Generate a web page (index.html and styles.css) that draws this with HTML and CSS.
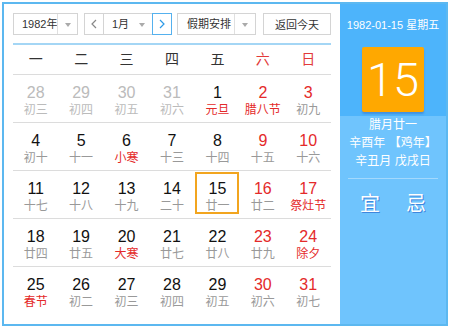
FILE: index.html
```html
<!DOCTYPE html>
<html lang="zh-CN">
<head>
    <meta charset="UTF-8">
    <title>万年历</title>
    <link rel="stylesheet" href="styles.css">
</head>
<body>

    <div class="calendar">
        <!-- Left: toolbar and month grid -->
        <div class="main">
            <div class="toolbar">
                <div class="select year">
                    <span class="select-text">1982年</span>
                    <span class="select-arrow"></span>
                </div>
                <div class="month-group">
                    <button class="nav prev">
                        <svg width="6" height="10" viewBox="0 0 6 10"><polyline points="5,1 1,5 5,9" fill="none" stroke="#888" stroke-width="1.2"/></svg>
                    </button>
                    <div class="select month">
                        <span class="select-text">1月</span>
                        <span class="select-arrow"></span>
                    </div>
                    <button class="nav next">
                        <svg width="6" height="10" viewBox="0 0 6 10"><polyline points="1,1 5,5 1,9" fill="none" stroke="#2d9ae6" stroke-width="1.2"/></svg>
                    </button>
                </div>
                <div class="select holiday">
                    <span class="select-text">假期安排</span>
                    <span class="select-arrow"></span>
                </div>
                <button class="today-btn">返回今天</button>
            </div>

            <div class="weekdays">
                <span>一</span><span>二</span><span>三</span><span>四</span><span>五</span>
                <span class="weekend">六</span><span class="weekend">日</span>
            </div>

            <div class="weeks">
                <div class="week">
                    <div class="day other"><b>28</b><i>初三</i></div>
                    <div class="day other"><b>29</b><i>初四</i></div>
                    <div class="day other"><b>30</b><i>初五</i></div>
                    <div class="day other"><b>31</b><i>初六</i></div>
                    <div class="day"><b>1</b><i class="fest">元旦</i></div>
                    <div class="day weekend"><b>2</b><i class="fest">腊八节</i></div>
                    <div class="day weekend"><b>3</b><i>初九</i></div>
                </div>
                <div class="week">
                    <div class="day"><b>4</b><i>初十</i></div>
                    <div class="day"><b>5</b><i>十一</i></div>
                    <div class="day"><b>6</b><i class="fest">小寒</i></div>
                    <div class="day"><b>7</b><i>十三</i></div>
                    <div class="day"><b>8</b><i>十四</i></div>
                    <div class="day weekend"><b>9</b><i>十五</i></div>
                    <div class="day weekend"><b>10</b><i>十六</i></div>
                </div>
                <div class="week">
                    <div class="day"><b>11</b><i>十七</i></div>
                    <div class="day"><b>12</b><i>十八</i></div>
                    <div class="day"><b>13</b><i>十九</i></div>
                    <div class="day"><b>14</b><i>二十</i></div>
                    <div class="day today"><b>15</b><i>廿一</i></div>
                    <div class="day weekend"><b>16</b><i>廿二</i></div>
                    <div class="day weekend"><b>17</b><i class="fest">祭灶节</i></div>
                </div>
                <div class="week">
                    <div class="day"><b>18</b><i>廿四</i></div>
                    <div class="day"><b>19</b><i>廿五</i></div>
                    <div class="day"><b>20</b><i class="fest">大寒</i></div>
                    <div class="day"><b>21</b><i>廿七</i></div>
                    <div class="day"><b>22</b><i>廿八</i></div>
                    <div class="day weekend"><b>23</b><i>廿九</i></div>
                    <div class="day weekend"><b>24</b><i class="fest">除夕</i></div>
                </div>
                <div class="week">
                    <div class="day"><b>25</b><i class="fest">春节</i></div>
                    <div class="day"><b>26</b><i>初二</i></div>
                    <div class="day"><b>27</b><i>初三</i></div>
                    <div class="day"><b>28</b><i>初四</i></div>
                    <div class="day"><b>29</b><i>初五</i></div>
                    <div class="day weekend"><b>30</b><i>初六</i></div>
                    <div class="day weekend"><b>31</b><i>初七</i></div>
                </div>
            </div>
        </div>

        <!-- Right: selected day details -->
        <div class="side">
            <div class="side-top">
                <div class="side-date">1982-01-15 星期五</div>
                <div class="big-day">15</div>
            </div>
            <div class="lunar-info">
                <div>腊月廿一</div>
                <div>辛酉年 【鸡年】</div>
                <div>辛丑月 戊戌日</div>
            </div>
            <div class="yi-ji">
                <span>宜</span>
                <span>忌</span>
            </div>
        </div>
    </div>

</body>
</html>
```

FILE: styles.css
```css
/* General */
body {
    margin: 0;
    background: #fff;
    font-family: "Liberation Sans", "Noto Sans CJK SC", sans-serif;
    color: #333;
}

.calendar {
    display: flex;
    box-sizing: border-box;
    width: 446px;
    height: 324px;
    margin: 2px;
    border: 2px solid #5cb8f0;
    background: #fff;
}

/* Left side */
.main {
    width: 336px;
    box-sizing: border-box;
    padding: 9px 9px 0;
}

.toolbar {
    display: flex;
    align-items: center;
    height: 22px;
    padding-bottom: 8px;
    border-bottom: 2px solid #a4d6f5;
    font-size: 11px;
}

.select {
    display: flex;
    box-sizing: border-box;
    height: 22px;
    border: 1px solid #d4d4d4;
    background: #fff;
}

.select-text {
    flex: 1;
    line-height: 20px;
    padding-left: 8px;
    white-space: nowrap;
    color: #333;
}

.select-arrow {
    position: relative;
    width: 20px;
    border-left: 1px solid #e0e0e0;
}

.select-arrow::after {
    content: "";
    position: absolute;
    left: 7px;
    top: 9px;
    border-left: 3px solid transparent;
    border-right: 3px solid transparent;
    border-top: 4px solid #aaa;
}

.year {
    width: 65px;
}

.month-group {
    display: flex;
    margin-left: 6px;
}

.nav {
    display: flex;
    align-items: center;
    justify-content: center;
    box-sizing: border-box;
    width: 20px;
    height: 22px;
    padding: 0;
    border: 1px solid #d4d4d4;
    background: #fff;
}

.nav.next {
    position: relative;
    margin-left: -1px;
    border-color: #55b1ee;
}

.month {
    width: 50px;
    margin-left: -1px;
}

.month .select-arrow {
    border-left: none;
}

.holiday {
    width: 79px;
    margin-left: 5px;
}

.holiday .select-text {
    padding-left: 9px;
}

.today-btn {
    margin-left: auto;
    box-sizing: border-box;
    width: 68px;
    height: 22px;
    padding: 0;
    border: 1px solid #d4d4d4;
    background: #fff;
    font-family: inherit;
    font-size: 11px;
    color: #333;
}

/* Weekday header */
.weekdays {
    display: grid;
    grid-template-columns: repeat(7, 1fr);
    height: 29px;
    line-height: 29px;
    border-bottom: 1px solid #dcdcdc;
    text-align: center;
    font-size: 14px;
    color: #333;
}

.weekdays .weekend {
    color: #e23a3a;
}

/* Month grid */
.week {
    display: grid;
    grid-template-columns: repeat(7, 1fr);
    height: 47px;
    border-bottom: 1px solid #dcdcdc;
}

.week:last-child {
    border-bottom: none;
}

.day {
    box-sizing: border-box;
    width: 44px;
    height: 42px;
    margin: 1px auto 0;
    padding-top: 6px;
    border: 2px solid transparent;
    text-align: center;
}

.day b {
    display: block;
    font-weight: normal;
    font-size: 16px;
    line-height: 18px;
    color: #111;
}

.day i {
    display: block;
    font-style: normal;
    font-size: 12px;
    line-height: 16px;
    color: #999;
    white-space: nowrap;
}

.day.weekend b {
    color: #e42a2a;
}

.day.other b {
    color: #bbb;
}

.day.other i {
    color: #bbb;
}

.day i.fest {
    color: #e42a2a;
}

.day.today {
    border-color: #f2a51f;
}

/* Right side */
.side {
    flex: 1;
    display: flex;
    flex-direction: column;
    background: #6fc4fd;
    color: #fff;
}

.side-top {
    display: flex;
    flex-direction: column;
    align-items: center;
    height: 112px;
    box-sizing: border-box;
    padding-top: 13px;
    background: #4db4fb;
}

.side-date {
    font-size: 11px;
    line-height: 16px;
}

.big-day {
    width: 62px;
    height: 65px;
    margin-top: 14px;
    border-radius: 2px;
    background: #ffa800;
    box-shadow: 0 2px 2px rgba(50, 80, 170, 0.35);
    text-align: center;
    font-family: Roboto, "Liberation Sans", sans-serif;
    font-weight: 300;
    font-size: 47px;
    line-height: 66px;
}

.lunar-info {
    padding: 0 0 8px;
    border-bottom: 1px solid #a3d9fd;
    margin: 0 8px;
    text-align: center;
    font-size: 12px;
    line-height: 18px;
}

.yi-ji {
    display: flex;
    justify-content: center;
    gap: 26px;
    padding-top: 14px;
    font-size: 20px;
    line-height: 22px;
    text-shadow: 1px 1px 0 #3f86dc;
}
```
